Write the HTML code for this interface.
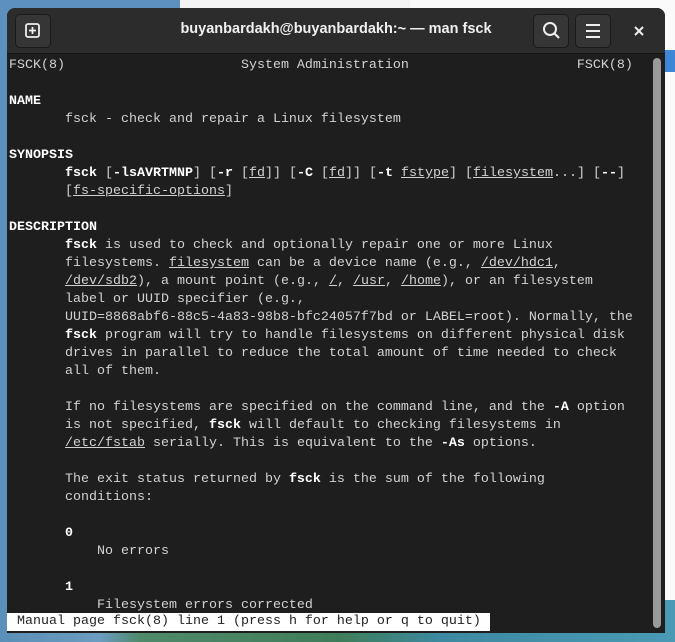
<!DOCTYPE html>
<html><head><meta charset="utf-8"><style>
html,body{margin:0;padding:0;width:675px;height:642px;overflow:hidden;background:linear-gradient(90deg,#5a8fb8 0,#6b9cc0 100px,#4f8a6a 140px,#3f7d5a 340px,#3d8aa0 440px,#4a9ab5 675px);font-family:"Liberation Sans",sans-serif}
.topbg{position:absolute;left:0;top:0;width:675px;height:600px;background:#f3f3f3}
.topbg .l{position:absolute;left:0;top:0;width:180px;height:600px;background:#5d8fbf}
.topbg .r{position:absolute;left:410px;top:0;width:265px;height:600px;background:#fafafa}
.topbg .b{position:absolute;left:660px;top:50px;width:15px;height:22px;background:#3d86d8}
.win{position:absolute;left:7px;top:8px;width:658px;height:625px;background:#1e1e1e;border-radius:8px 8px 0 0;overflow:hidden}
.hdr{position:absolute;left:0;top:0;width:658px;height:45px;background:#2c2c2c;border-bottom:1px solid #151515}
.btn{position:absolute;top:6px;width:34px;height:32px;background:#363636;border-radius:5px;border:1px solid #1a1a1a}
.title{position:absolute;left:0;width:658px;top:13px;text-align:center;color:#f0f0f0;font-weight:bold;font-size:14.5px}
pre{position:absolute;left:2px;top:49px;margin:0;font-family:"Liberation Mono",monospace;font-size:13.33px;line-height:18px;color:#d2d2d2}
b{color:#fff}
u{text-decoration:underline}
.sb{position:absolute;left:646px;top:50px;width:8px;height:570px;background:#9a9a9a;border-radius:4px}
.st{position:absolute;left:0;top:605px;width:483px;height:18px;background:#fff;color:#222;font-family:"Liberation Mono",monospace;font-size:13.33px;line-height:18px;padding-left:10px;box-sizing:border-box;white-space:pre}
</style></head><body>
<div class="topbg"><div class="l"></div><div class="r"></div><div class="b"></div></div>
<div class="win">
<div class="hdr">
<div class="btn" style="left:8px"><svg width="34" height="32"><rect x="10" y="9" width="13" height="13" rx="2" fill="none" stroke="#eee" stroke-width="1.8"/><path d="M16.5 12v7M13 15.5h7" stroke="#eee" stroke-width="1.8"/></svg></div>
<div class="title">buyanbardakh@buyanbardakh:~ — man fsck</div>
<div class="btn" style="left:526px"><svg width="34" height="32"><circle cx="16" cy="14" r="6" fill="none" stroke="#eee" stroke-width="2"/><path d="M20 18l5 5" stroke="#eee" stroke-width="2.2"/></svg></div>
<div class="btn" style="left:568px"><svg width="34" height="32"><path d="M10 10h14M10 16h14M10 22h14" stroke="#eee" stroke-width="2"/></svg></div>
<svg style="position:absolute;left:626px;top:17px" width="12" height="12"><path d="M2 2l8 8M10 2l-8 8" stroke="#eee" stroke-width="2"/></svg>
</div>
<pre>FSCK(8)                      System Administration                     FSCK(8)

<b>NAME</b>
       fsck - check and repair a Linux filesystem

<b>SYNOPSIS</b>
       <b>fsck</b> [<b>-lsAVRTMNP</b>] [<b>-r</b> [<u>fd</u>]] [<b>-C</b> [<u>fd</u>]] [<b>-t</b> <u>fstype</u>] [<u>filesystem</u>...] [<b>--</b>]
       [<u>fs-specific-options</u>]

<b>DESCRIPTION</b>
       <b>fsck</b> is used to check and optionally repair one or more Linux
       filesystems. <u>filesystem</u> can be a device name (e.g., <u>/dev/hdc1</u>,
       <u>/dev/sdb2</u>), a mount point (e.g., <u>/</u>, <u>/usr</u>, <u>/home</u>), or an filesystem
       label or UUID specifier (e.g.,
       UUID=8868abf6-88c5-4a83-98b8-bfc24057f7bd or LABEL=root). Normally, the
       <b>fsck</b> program will try to handle filesystems on different physical disk
       drives in parallel to reduce the total amount of time needed to check
       all of them.

       If no filesystems are specified on the command line, and the <b>-A</b> option
       is not specified, <b>fsck</b> will default to checking filesystems in
       <u>/etc/fstab</u> serially. This is equivalent to the <b>-As</b> options.

       The exit status returned by <b>fsck</b> is the sum of the following
       conditions:

       <b>0</b>
           No errors

       <b>1</b>
           Filesystem errors corrected</pre>
<div class="sb"></div>
<div class="st">Manual page fsck(8) line 1 (press h for help or q to quit)</div>
</div>
</body></html>
